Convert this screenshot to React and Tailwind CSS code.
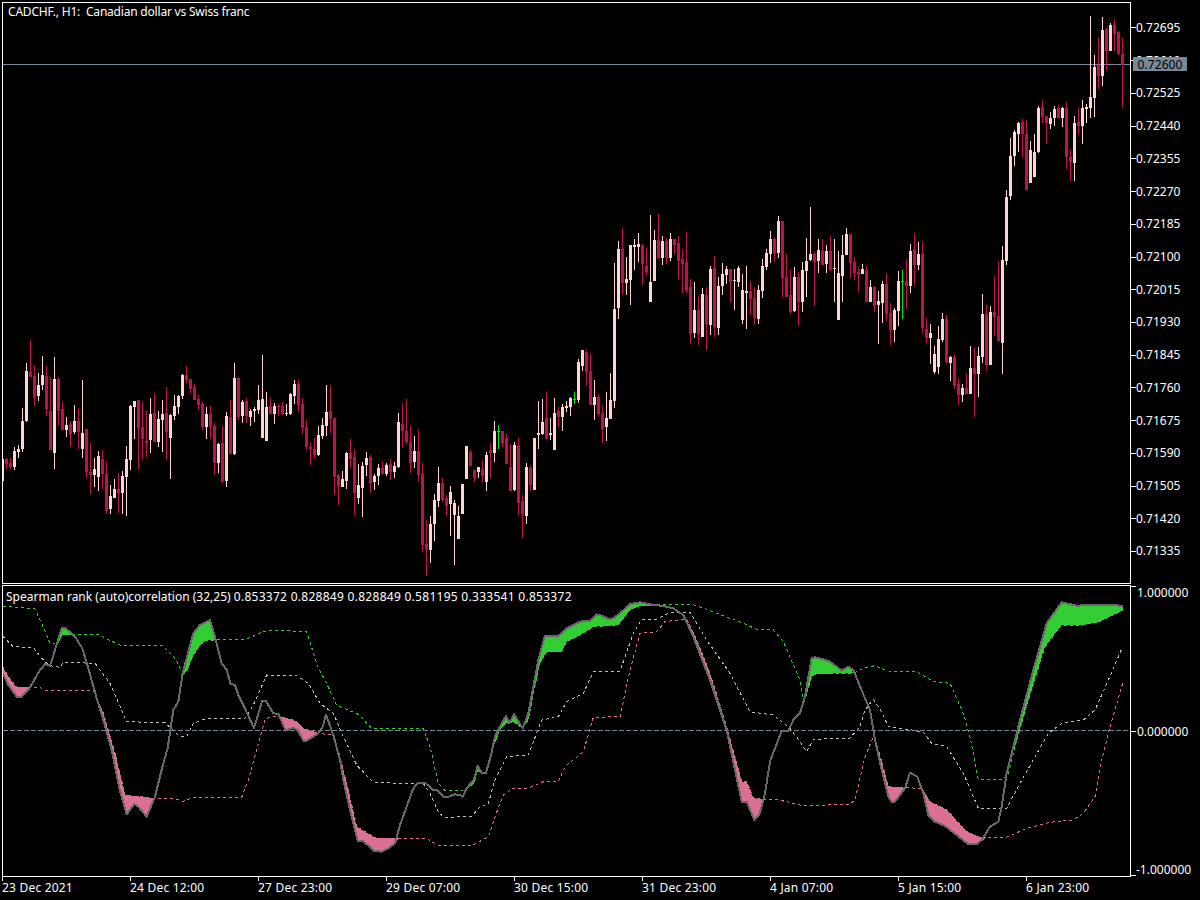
import React from 'react';

const UP = '#ffd5d2';
const DOWN = '#c0114f';
const DOJI = '#00e600';

// candle rows: colour high bodyTop bodyBottom low, measured at 3x from yBase
const CANDLES = [
  { start: 2, yBase: 340, rows: `u 357 357 423 423
d 354 357 372 387
d 354 369 381 387
u 321 333 381 390
u 315 327 336 354
u 204 243 327 336
u 69 93 243 246
d 0 96 111 111
d 78 108 174 198
u 99 135 168 183
u 48 105 135 150
d 78 108 207 228
d 111 213 330 330
u 51 117 339 387
d 111 117 213 255
d 186 207 270 270
u 231 255 270 291
d 243 252 282 321
u 195 243 276 282
d 204 243 276 327
u 120 279 327 354
d 267 267 396 414
d 309 396 405 462
u 354 387 405 441
u 333 348 411 453
d 330 357 402 447
d 363 402 513 522
u 435 468 507 522
u 417 447 474 474
d 399 447 459 519
u 393 408 459 522
u 318 357 411 528
u 195 198 360 390
u 183 183 201 297
d 180 180 264 387
d 186 261 297 360
d 213 303 309 351
u 174 222 300 339
d 159 219 306 306
u 213 237 306 321
u 180 222 240 336
d 141 219 276 360
u 222 225 294 417
u 165 198 228 240
u 165 168 201 222
u 102 105 168 177
d 78 105 120 129
d 117 117 147 159
d 132 141 180 180
d 165 177 195 210
d 186 192 261 270
u 201 222 261 297
d 198 222 261 297
d 249 258 369 405
u 309 312 369 399
d 258 309 423 429
u 216 228 423 441
d 180 231 342 342
u 69 114 342 345
d 111 114 231 240
u 180 186 228 249
d 174 183 228 249
u 207 213 231 258
u 201 207 213 246
u 135 180 210 222
u 45 177 294 294
u 156 201 303 303
d 174 198 222 222
u 189 198 222 252
d 192 198 201 228
d 186 198 222 225
u 192 219 222 228
u 159 162 222 225
u 120 132 168 192
d 120 132 195 216` },
  { start: 302, yBase: 340, rows: `d 174 192 264 282
d 240 261 321 330
d 309 321 327 375
d 294 327 345 357
u 258 285 345 348
u 234 255 288 297
u 135 216 258 288
d 135 213 237 279
d 234 234 411 465
d 402 405 438 495
u 393 417 441 441
u 336 339 423 447
d 297 339 357 384
d 327 351 459 525
u 372 435 474 492
u 366 378 444 531
u 336 354 375 408
d 345 351 429 459
u 402 408 426 450
u 372 384 408 435
d 363 384 402 402
u 369 375 402 408
d 357 372 396 420
u 366 378 396 414
u 219 246 381 384
d 189 252 273 324
d 177 273 306 312
d 258 306 369 399
u 288 333 366 384
d 267 333 405 426
d 369 402 615 636
d 540 612 627 708
u 528 552 630 669
u 462 480 552 603
u 381 429 483 501
d 414 429 480 486
d 465 474 498 528
u 438 456 492 588
u 480 489 525 675
u 498 528 597 597
u 432 432 522 522
u 318 318 417 417
d 330 336 378 378
d 387 390 414 426
u 381 381 396 414
d 360 387 408 426
u 336 345 426 453
d 309 330 339 414
u 243 273 339 366
g 255 273 276 327
d 273 273 309 321
d 279 294 372 372
d 312 381 453 453
u 306 315 450 453
d 294 318 489 525
d 465 483 522 594
u 369 381 528 552
d 378 384 435 453
u 294 294 450 450
u 183 279 285 327
u 177 246 282 285
d 156 234 297 297
u 234 279 285 300
u 174 219 330 330
d 201 213 231 264
u 192 201 231 273
u 183 198 204 216
u 171 174 201 228
g 156 177 180 192
u 57 66 180 189
u 30 30 78 93
d 27 36 96 138
d 39 93 195 195
u 120 171 195 240
d 162 171 222 231
d 195 219 267 309
u 156 234 261 303
u 99 180 237 237` },
  { start: 614, yBase: 200, rows: `u 189 327 603 624
u 123 147 324 357
d 84 147 249 285
u 171 237 249 285
u 135 135 240 315
u 117 135 141 210
u 99 132 141 186
d 132 135 192 255
d 144 198 216 228
u 45 246 306 306
u 90 120 243 243
d 42 120 174 177
u 108 123 174 195
d 114 123 174 192
u 99 117 174 183
d 117 117 135 162
d 108 129 183 240
d 147 177 192 279
d 96 186 273 279
d 237 261 402 432
u 246 330 399 414
d 288 330 402 435
u 264 282 411 411
d 261 285 372 450
u 198 207 375 405
d 168 204 381 411
u 231 258 384 405
u 189 222 258 285
u 198 207 225 252
d 207 207 246 306
u 207 240 243 330
u 198 204 246 261
u 222 270 360 372
u 198 273 279 387
d 243 273 297 345
d 261 294 354 372
u 255 270 357 372
u 177 198 273 294
u 147 159 201 210
u 93 117 162 189
d 111 117 159 186
u 48 63 159 174
d 63 63 234 291
d 162 231 291 291
d 210 285 336 342
u 201 231 333 336
d 216 231 306 378
u 186 210 306 336
u 114 183 213 291
u 21 162 180 183
d 156 162 186 318
u 117 150 183 219
d 117 153 195 195
u 135 153 192 219
d 108 153 210 213
u 117 204 207 306
u 153 219 360 360
u 105 165 228 306
u 84 102 165 165
d 102 102 189 234
d 171 186 219 240
d 201 216 225 276
u 192 207 222 222
d 198 210 306 306
u 240 261 306 306
d 258 261 318 336
u 273 303 315 432
u 243 252 309 369
d 219 252 342 363
d 309 339 390 435
u 324 330 390 426
u 213 243 333 378
g 210 243 246 357
d 177 243 258 327
u 132 153 258 279
d 99 147 195 255
u 126 162 195 210
d 123 162 384 399
d 354 387 414 429
u 372 399 414 492
u 438 462 516 522
u 378 417 501 522
u 339 357 420 426
d 345 357 486 492
u 468 471 489 543
d 462 471 558 567
d 534 552 585 615
u 552 564 585 606
d 519 564 582 582
u 438 504 582 582
d 444 504 522 651
u 441 468 522 591
u 282 342 471 489
d 315 342 495 513
u 318 336 495 495
d 228 336 351 408
d 183 348 423 426
u 138 180 429 522
u -30 -9 183 195` },
  { start: 1010, yBase: 0, rows: `u 414 468 588 600
u 390 396 468 498
u 366 369 402 456
d 357 366 402 471
d 360 402 570 570
u 423 450 549 549
u 402 456 531 531
u 318 324 456 459
d 300 321 351 369
d 348 348 369 432
u 336 354 372 387
u 318 327 354 378
d 315 324 354 354
u 321 324 354 381
d 306 324 471 507
d 447 471 486 543
u 348 369 489 543
d 324 366 378 405
u 300 324 378 432
u 312 321 327 369
u 48 291 324 354
u 165 201 294 351
d 114 195 228 267
u 51 90 228 258
d 84 87 153 210
u 69 75 153 153
d 57 75 102 153
d 93 96 162 165
d 114 162 195 324` },
];

const COLORS = { u: UP, d: DOWN, g: DOJI };

const candles = CANDLES.flatMap(({ start, yBase, rows }) =>
  rows.split('\n').map((row, i) => {
    const [c, hi, top, bot, lo] = row.trim().split(' ');
    const y = (v) => Math.round(yBase + Number(v) / 3);
    return { x: start + i * 4, color: COLORS[c], hi: y(hi), top: y(top), bot: y(bot), lo: y(lo) };
  })
);

// indicator traces, also measured at 3x: each part is [pixel x offset, "x,y x,y ..."]
const toPoints = (parts) =>
  parts
    .flatMap(([dx, pts]) =>
      pts.trim().split(/\s+/).map((p) => {
        const [x, y] = p.split(',').map(Number);
        return `${dx + x / 3},${580 + y / 3}`;
      })
    )
    .join(' ');

const MAIN = toPoints([
  [0, '8,280 25,315 50,350 65,350 85,330 100,305 115,278 135,252 150,257 165,210 185,145 197,145 225,170 247,205 265,265 290,355 310,420 335,510 358,625 380,703 403,672 415,680 440,710 465,650 490,550 503,505 520,390 535,365 548,280 560,235 580,160 600,135 630,120 645,170 665,250 680,270 692,312 705,315 715,345 730,375 762,444 787,362 797,362 820,400 835,402 857,452 880,443 893,450 910,482 920,482 955,460 968,440 978,404 1000,465 1020,540 1030,600 1050,690 1073,782 1088,782 1122,812 1145,815 1165,805 1185,790 1200,735'],
  [400, '20,680 40,625 55,608 75,608 100,630 112,630 130,650 145,650 165,643 180,645 188,650 200,625 222,598 233,558 245,578 258,578 272,530 285,470 300,440 318,408 328,428 342,403 368,445 385,400 400,320 415,240 435,167 475,168 500,145 540,125 570,122 590,103 605,107 625,117 640,115 665,95 690,72 720,67 750,73 790,78 820,85 850,105 880,170 930,300 980,450 1025,665 1040,665 1063,720 1078,705 1095,640 1110,545 1145,452 1165,452 1180,420 1200,400'],
  [800, '15,350 35,235 45,232 70,238 90,245 110,260 125,272 145,260 160,270 195,355 210,390 225,480 245,570 265,650 275,665 285,665 315,625 330,578 352,590 370,640 385,705 405,725 435,738 470,765 505,793 530,793 545,780 570,740 595,725 605,680 620,580 660,420 700,270 740,130 785,67 830,77 870,75 940,75 968,78'],
]);

const UPPER = toPoints([
  [0, '10,78 105,87 125,130 150,190 165,190 185,163 225,163 295,163 320,177 365,197 490,198 525,235 548,280 560,270 580,225 600,195 620,180 650,180 740,177 790,155 810,150 920,155 955,265 975,300 1010,375 1075,403 1115,445 1200,445'],
  [400, '70,445 90,500 115,610 135,632 190,632 222,610 233,570 245,580 258,580 275,510 285,490 300,445 318,430 328,430 342,425 365,445 385,420 400,340 420,250 440,215 485,215 500,185 540,165 580,140 655,135 690,90 720,75 750,75 800,73 875,73 920,88 1030,130 1070,148 1120,150 1150,185 1200,300'],
  [800, '10,355 20,345 35,290 50,280 160,280 190,265 225,257 265,273 350,275 400,305 450,310 490,400 510,470 535,598 610,598 625,580 650,480 700,310 735,200 785,135 850,135 900,125 968,90'],
]);

const LOWER = toPoints([
  [0, '8,260 25,290 50,322 120,322 140,333 280,330 310,400 345,520 375,645 465,655 520,655 550,664 580,652 725,652 745,600 770,510 795,420 810,410 835,410 870,417 890,425 910,445 955,460 1000,465 1020,530 1040,610 1070,740 1095,755 1130,775 1200,775'],
  [400, '80,775 110,795 220,795 265,770 285,710 310,645 340,625 385,625 430,605 475,605 495,560 550,515 580,412 660,410 690,270 720,160 770,155 795,125 860,117 890,180 930,280 980,440 1025,605 1040,605 1060,655 1090,657 1130,658 1200,675'],
  [800, '20,677 150,673 165,660 195,530 222,465 245,545 265,620 310,623 365,625 390,665 440,690 500,755 540,772 620,772 680,745 750,727 820,720 850,700 885,650 905,540 930,440 968,310'],
]);

const MIDDLE = toPoints([
  [0, '8,168 40,200 100,203 130,240 150,257 180,262 190,247 285,250 330,310 380,425 495,428 540,470 560,470 580,430 620,415 735,415 760,375 800,285 890,287 925,310 960,370 1000,400 1030,470 1070,555 1120,607 1200,610'],
  [400, '70,610 90,640 115,695 130,712 215,710 235,685 265,670 285,600 320,530 385,525 425,420 475,410 500,365 550,340 580,275 660,273 700,160 725,118 770,118 810,98 870,97 920,180 990,280 1050,395 1120,405 1170,445 1200,485'],
  [800, '20,515 40,478 150,474 180,440 195,390 220,358 245,395 265,440 335,450 370,457 395,490 440,500 490,580 535,685 620,685 660,610 745,460 785,430 850,420 885,390 925,300 968,200'],
]);

const GREEN_FILLS = [
  [0, '163,215 185,145 197,145 222,165 187,165'],
  [0, '548,290 560,235 580,160 600,135 630,120 650,180 620,180 600,195 580,225 565,265'],
  [400, '195,630 222,598 233,558 245,578 258,578 272,530 285,470 300,440 318,408 328,428 342,403 368,445 385,400 400,320 415,240 435,167 475,168 500,145 540,125 570,122 590,103 605,107 625,117 640,115 665,95 690,72 720,67 750,73 790,75 720,78 690,90 655,135 580,140 540,165 500,185 485,215 440,215 420,250 400,340 385,420 368,445 342,425 328,430 318,430 300,450 285,490 275,510 258,580 245,580 233,575 222,610'],
  [800, '0,390 15,350 35,235 45,232 70,238 90,245 110,260 125,272 145,260 160,278 50,282 35,290 20,345'],
  [800, '620,580 660,420 700,270 740,130 785,67 830,77 870,75 968,78 968,90 900,125 850,135 785,135 735,200 700,310 650,480'],
];

const PINK_FILLS = [
  [0, '8,260 25,290 50,322 95,322 85,330 65,350 50,350 25,315 8,280'],
  [0, '280,330 310,400 345,520 375,645 465,655 440,710 415,680 403,672 380,703 358,625 335,510 310,420 290,355'],
  [0, '835,408 870,417 890,425 910,445 955,460 920,482 910,482 893,450 880,443 857,452'],
  [0, '1010,490 1040,610 1070,740 1095,755 1130,775 1195,775 1185,790 1165,805 1145,815 1122,812 1088,782 1073,782 1050,690 1030,600'],
  [400, '860,115 890,180 930,280 980,440 1025,605 1040,605 1060,655 1090,657 1078,705 1063,720 1040,665 1025,665 980,450 930,300 880,170'],
  [800, '222,465 245,545 265,620 315,623 285,665 275,665 265,650 245,570 225,480'],
  [800, '365,625 390,665 440,690 500,755 540,772 560,772 530,793 505,793 470,765 435,738 405,725 385,705 370,640'],
];

const PRICES = ['0.72695', '0.72610', '0.72525', '0.72440', '0.72355', '0.72270', '0.72185', '0.72100', '0.72015', '0.71930', '0.71845', '0.71760', '0.71675', '0.71590', '0.71505', '0.71420', '0.71335'];
const TIMES = ['23 Dec 2021', '24 Dec 12:00', '27 Dec 23:00', '29 Dec 07:00', '30 Dec 15:00', '31 Dec 23:00', '4 Jan 07:00', '5 Jan 15:00', '6 Jan 23:00'];

function Tick() {
  return <span className="w-[5px] h-px bg-white shrink-0" />;
}

export default function App() {
  return (
    <div className="w-[1200px] h-[900px] bg-black text-white overflow-hidden pt-[2px] pl-[2px] font-['Noto_Sans',sans-serif] text-[12px] leading-[14px]">
      {/* price pane */}
      <div className="flex h-[582px]">
        <div className="relative w-[1129px] border border-white">
          <svg className="block" width="1127" height="580" viewBox="3 3 1127 580" shapeRendering="crispEdges">
            <line x1="3" x2="1130" y1="64.5" y2="64.5" stroke="#778899" />
            {candles.map((c) => (
              <g key={c.x} fill={c.color}>
                <rect x={c.x} y={c.hi} width="1" height={Math.max(c.lo - c.hi, 1)} />
                <rect x={c.x - 1} y={c.top} width="3" height={Math.max(c.bot - c.top, 1)} />
              </g>
            ))}
          </svg>
          <div className="absolute left-[5px] top-[2px] tracking-[-0.2px]">CADCHF., H1:&nbsp; Canadian dollar vs Swiss franc</div>
        </div>
        <div className="relative flex-1 pt-[9.64px]">
          {PRICES.map((p) => (
            <div key={p} className="flex items-center h-[32.73px]">
              <Tick />
              <span>{p}</span>
            </div>
          ))}
          <div className="absolute left-[2px] top-[55px] w-[54px] h-[14px] bg-[#778899] text-black text-center leading-[15px] tracking-[0.1px]">0.72600</div>
        </div>
      </div>

      {/* indicator pane */}
      <div className="flex h-[292px] mt-px">
        <div className="relative w-[1129px] border border-white">
          <svg className="block" width="1127" height="290" viewBox="3 586 1127 290" shapeRendering="crispEdges">
            <g fill="none" strokeWidth="1" strokeDasharray="3 3">
              <polyline points={UPPER} stroke="#32cd32" />
              <polyline points={LOWER} stroke="#db7093" />
              <polyline points={MIDDLE} stroke="#c0c0c0" />
              <line x1="3" x2="1130" y1="730.5" y2="730.5" stroke="#778899" strokeDasharray="5 2" />
            </g>
            {GREEN_FILLS.map((f, i) => (
              <polygon key={i} points={toPoints([f])} fill="#32cd32" />
            ))}
            {PINK_FILLS.map((f, i) => (
              <polygon key={i} points={toPoints([f])} fill="#db7093" />
            ))}
            <polyline points={MAIN} fill="none" stroke="#696969" strokeWidth="2" strokeLinejoin="round" />
          </svg>
          <div className="absolute left-[3px] top-[4px]">
            Spearman rank (auto)correlation (32,25) <span className="tracking-[0.28px]">0.853372 0.828849 0.828849 0.581195 0.333541 0.853372</span>
          </div>
        </div>
        <div className="flex-1 flex flex-col justify-between">
          <div className="flex items-start gap-[1px] pt-px">
            <span className="w-[5px] h-px bg-white shrink-0" />
            <span>1.000000</span>
          </div>
          <div className="flex items-center gap-[1px]">
            <Tick />
            <span>0.000000</span>
          </div>
          <div className="flex items-end">
            <span className="w-[5px] h-px bg-white shrink-0 mb-px" />
            <span>-1.000000</span>
          </div>
        </div>
      </div>

      {/* time axis */}
      <div className="flex">
        {TIMES.map((t) => (
          <div key={t} className="w-[128px] flex flex-col tracking-[0.2px]">
            <span className="w-px h-[4px] bg-white" />
            <span>{t}</span>
          </div>
        ))}
      </div>
    </div>
  );
}
